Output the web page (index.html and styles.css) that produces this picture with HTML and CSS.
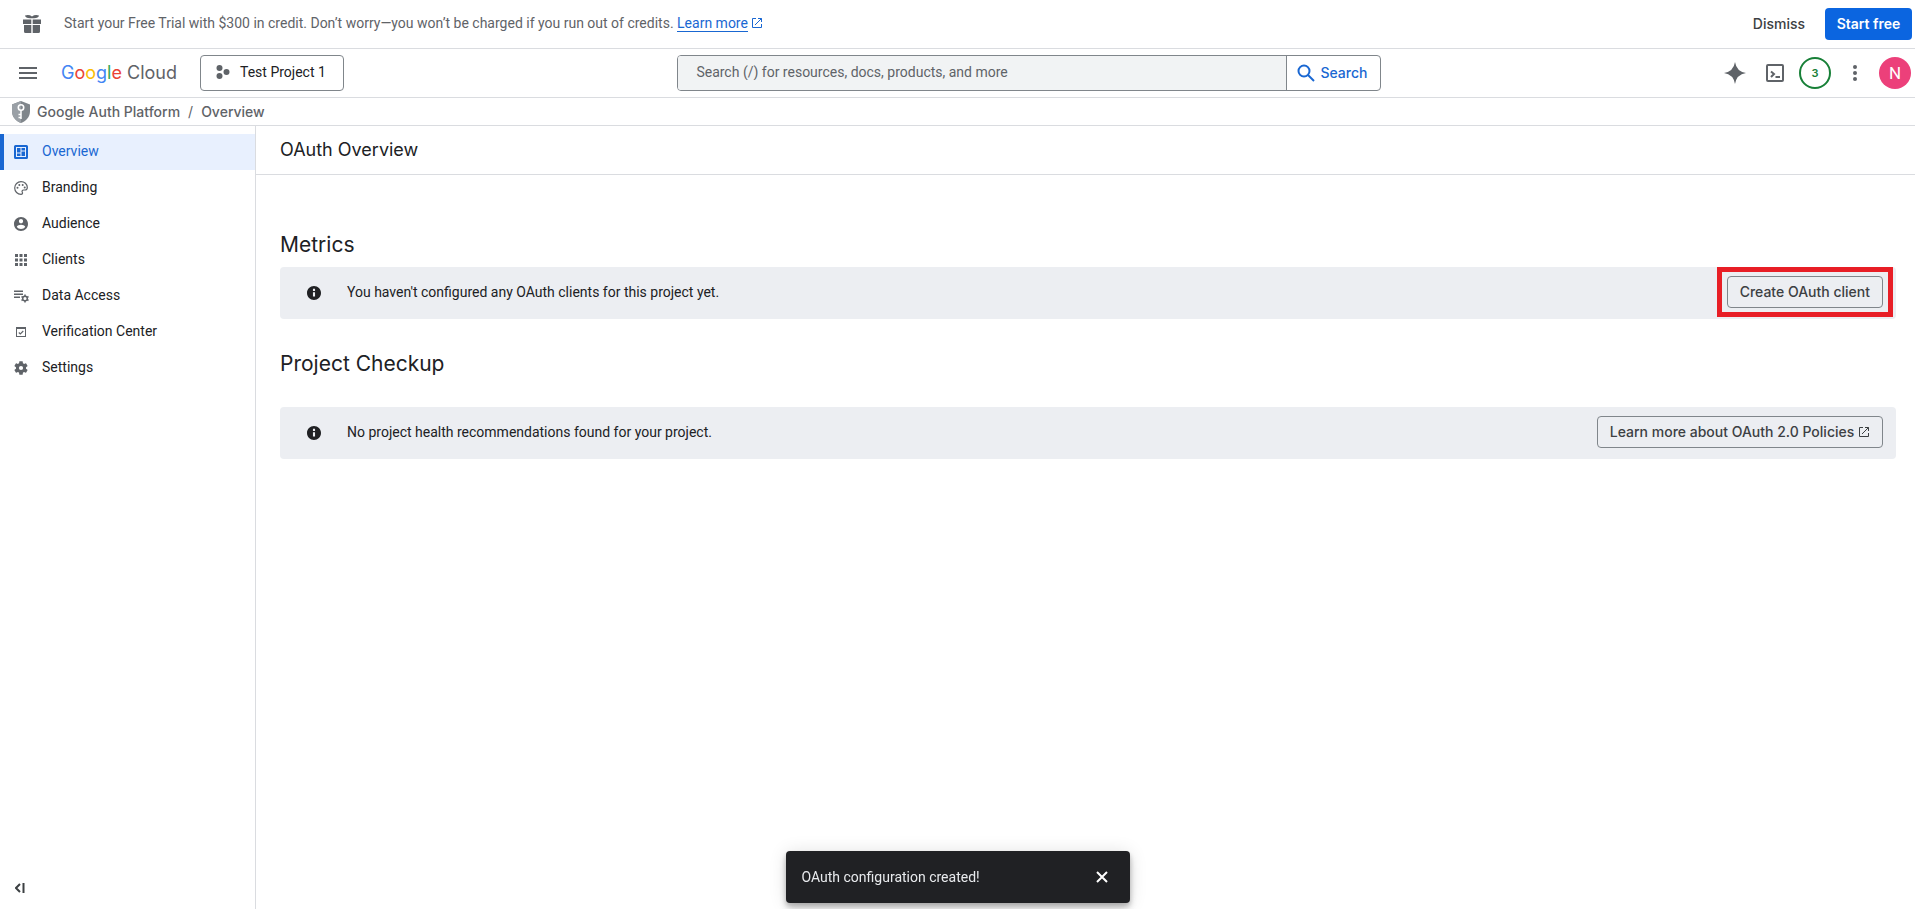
FILE: index.html
```html
<!DOCTYPE html>
<html lang="en">
<head>
    <meta charset="UTF-8">
    <meta name="viewport" content="width=device-width, initial-scale=1.0">
    <title>OAuth Overview – Google Auth Platform</title>
    <link rel="stylesheet" href="styles.css">
</head>
<body>
    <div class="promo">
        <svg class="promo-icon" viewBox="0 0 18 18" aria-hidden="true">
            <path d="M0 4.500h8.300V9H0zM9.700 4.500H18V9H9.700zM1 10h7.300v8H2.500A1.500 1.500 0 0 1 1 16.500zM9.700 10H17v6.500a1.500 1.500 0 0 1-1.500 1.500H9.700zM2 .5Q6-.8 9 1.500Q12-.8 16 .5Q15.500 3.200 11 3.200H7Q2.500 3.200 2 .5z"/>
        </svg>
        <p class="promo-text">Start your Free Trial with $300 in credit. Don’t worry—you won’t be charged if you run out of credits. <a href="#">Learn more</a>
            <svg class="external" viewBox="0 0 12 12" aria-hidden="true"><path d="M5 1.500H1.500v9h9V7M7 1.500h3.500V5M10.500 1.500L4 8"/></svg>
        </p>
        <button class="text-button" type="button">Dismiss</button>
        <button class="primary-button" type="button">Start free</button>
    </div>

    <header class="topbar">
        <div class="topbar-left">
            <button class="menu-button" type="button" aria-label="Main menu">
                <svg viewBox="0 0 18 12" width="18" height="12"><path d="M0 0h18v2H0zM0 5h18v2H0zM0 10h18v2H0z"/></svg>
            </button>
            <a class="logo" href="#"><span class="blue">G</span><span class="red">o</span><span class="yellow">o</span><span class="blue">g</span><span class="green">l</span><span class="red">e</span> Cloud</a>
            <button class="project-button" type="button">
                <svg viewBox="0 0 14 14" width="14" height="14"><circle cx="3.500" cy="3" r="3"/><circle cx="3.500" cy="11" r="3"/><circle cx="10.500" cy="7" r="3"/></svg>
                Test Project 1
            </button>
        </div>
        <form class="search" role="search">
            <input type="search" aria-label="Search" placeholder="Search (/) for resources, docs, products, and more">
            <button type="button">
                <svg viewBox="0 0 18 18" width="18" height="18"><circle cx="7" cy="7" r="5.500"/><path d="M11 11l6 6"/></svg>
                Search
            </button>
        </form>
        <div class="topbar-right">
            <button type="button" aria-label="Gemini">
                <svg viewBox="0 0 22 22" width="22" height="22"><path d="M11 0Q12.500 9.500 22 11Q12.500 12.500 11 22Q9.500 12.500 0 11Q9.500 9.500 11 0z"/></svg>
            </button>
            <button type="button" aria-label="Cloud Shell">
                <svg class="line-icon" viewBox="0 0 18 18" width="18" height="18"><rect x="1" y="1" width="16" height="16" rx="1"/><path d="M5 7.500l3 2.500-3 3M9.500 13H14"/></svg>
            </button>
            <button type="button" aria-label="Notifications"><span class="count">3</span></button>
            <button type="button" aria-label="More options">
                <svg viewBox="0 0 4 16" width="4" height="16"><circle cx="2" cy="2" r="2"/><circle cx="2" cy="8" r="2"/><circle cx="2" cy="14" r="2"/></svg>
            </button>
            <button type="button" aria-label="Account"><span class="avatar">N</span></button>
        </div>
    </header>

    <nav class="breadcrumb" aria-label="Breadcrumb">
        <svg viewBox="0 0 18 22" width="18" height="22" aria-hidden="true">
            <path fill="#80868b" d="M9 0l9 3.500V10c0 6-4 10-9 12C4 20 0 16 0 10V3.500z"/>
            <path fill="#9aa0a6" d="M9 0L0 3.500V10c0 6 4 10 9 12z"/>
            <path fill="none" stroke="#fff" stroke-width="1.500" d="M9 9v9M9 13.500H6.500M9 16.500H6.500"/>
            <circle cx="9" cy="6.500" r="2.700" fill="none" stroke="#fff" stroke-width="1.600"/>
        </svg>
        <a href="#">Google Auth Platform</a>
        <span class="slash">/</span>
        <span>Overview</span>
    </nav>

    <div class="layout">
        <aside class="sidebar">
            <nav>
                <a class="nav-item active" href="#">
                    <svg viewBox="0 0 14 14"><path fill-rule="evenodd" d="M1.500 0h11A1.500 1.500 0 0 1 14 1.500v11a1.500 1.500 0 0 1-1.500 1.500h-11A1.500 1.500 0 0 1 0 12.500v-11A1.500 1.500 0 0 1 1.500 0zM2 2v10h10V2zM3 3h3.500v4.500H3zM7.500 3H11v2.500H7.500zM7.500 6.500H11V11H7.500zM3 8.500h3.500V11H3z"/></svg>
                    Overview
                </a>
                <a class="nav-item" href="#">
                    <svg viewBox="0 0 14 14"><path fill="none" stroke="#5f6368" stroke-width="1.200" d="M7 .7a6.300 6.300 0 0 0 0 12.600c1.400 0 1.900-1 1.300-2-.7-1.200 0-2.300 1.200-2.300H11c1.500 0 2.300-1 2.300-2.500C13.300 3 10.400.7 7 .7z"/><circle cx="3.500" cy="6.800" r="1"/><circle cx="5.300" cy="3.900" r="1"/><circle cx="8.700" cy="3.900" r="1"/><circle cx="10.700" cy="6.500" r="1"/></svg>
                    Branding
                </a>
                <a class="nav-item" href="#">
                    <svg viewBox="2 2 20 20"><path d="M12 2C6.480 2 2 6.480 2 12s4.480 10 10 10 10-4.480 10-10S17.520 2 12 2zm0 3c1.660 0 3 1.340 3 3s-1.340 3-3 3-3-1.340-3-3 1.340-3 3-3zm0 14.200c-2.500 0-4.710-1.280-6-3.220.03-1.990 4-3.080 6-3.080 1.990 0 5.970 1.090 6 3.080-1.290 1.940-3.500 3.220-6 3.220z"/></svg>
                    Audience
                </a>
                <a class="nav-item" href="#">
                    <svg viewBox="0 0 14 14"><path d="M1 1h3v3H1zM5.500 1h3v3h-3zM10 1h3v3h-3zM1 5.500h3v3H1zM5.500 5.500h3v3h-3zM10 5.500h3v3h-3zM1 10h3v3H1zM5.500 10h3v3h-3zM10 10h3v3h-3z"/></svg>
                    Clients
                </a>
                <a class="nav-item" href="#">
                    <svg viewBox="0 0 14 14"><path d="M0 1.500h9V3H0zM0 4.500h9V6H0zM0 7.500h6V9H0z"/><circle cx="11" cy="9.500" r="2.300" fill="none" stroke="#5f6368" stroke-width="1.500"/><path fill="none" stroke="#5f6368" stroke-width="1.500" d="M11 5.500V7M11 12v1.500M7.500 7.500l1.300.8M13.200 10.700l1.300.8M7.500 11.500l1.300-.8M13.200 8.300l1.300-.8"/></svg>
                    Data Access
                </a>
                <a class="nav-item" href="#">
                    <svg viewBox="0 0 14 14"><path fill-rule="evenodd" d="M2 2h10v10H2zM3 4v7h8V4z"/><path fill="none" stroke="#5f6368" stroke-width="1.100" d="M4.800 7.500l1.500 1.500 3-3"/></svg>
                    Verification Center
                </a>
                <a class="nav-item" href="#">
                    <svg viewBox="2 2 20 20"><path d="M19.140 12.940c.04-.3.060-.61.060-.94 0-.32-.02-.64-.07-.94l2.030-1.580c.18-.14.230-.41.120-.61l-1.920-3.320c-.12-.22-.37-.29-.59-.22l-2.390.96c-.5-.38-1.030-.7-1.620-.94l-.36-2.540c-.04-.24-.24-.41-.48-.41h-3.840c-.24 0-.43.170-.47.410l-.36 2.540c-.59.240-1.130.570-1.620.940l-2.390-.96c-.22-.08-.47 0-.59.220L2.740 8.870c-.12.210-.08.470.120.610l2.030 1.580c-.05.3-.09.630-.09.940s.02.640.070.940l-2.030 1.580c-.18.140-.23.410-.12.610l1.920 3.320c.12.220.37.290.59.220l2.390-.96c.5.380 1.030.7 1.620.940l.36 2.540c.05.240.24.410.48.410h3.840c.24 0 .44-.17.470-.41l.36-2.540c.59-.24 1.130-.56 1.620-.94l2.390.96c.22.080.47 0 .59-.22l1.920-3.320c.12-.22.070-.47-.12-.61l-2.010-1.580zM12 15a3 3 0 1 1 0-6 3 3 0 0 1 0 6z"/></svg>
                    Settings
                </a>
            </nav>
            <button class="collapse" type="button" aria-label="Collapse navigation">
                <svg viewBox="0 0 10 10" width="10" height="10"><path d="M5 1L1 5l4 4M8.500 0v10"/></svg>
            </button>
        </aside>

        <main>
            <h1>OAuth Overview</h1>
            <section class="content">
                <h2>Metrics</h2>
                <div class="notice">
                    <svg class="info" viewBox="2 2 20 20" aria-hidden="true"><path d="M12 2C6.480 2 2 6.480 2 12s4.480 10 10 10 10-4.480 10-10S17.520 2 12 2zm1.500 15h-3v-6h3v6zm0-8h-3V6h3v3z"/></svg>
                    <p>You haven't configured any OAuth clients for this project yet.</p>
                    <button class="outline-button highlight" type="button">Create OAuth client</button>
                </div>
                <h2 class="checkup">Project Checkup</h2>
                <div class="notice">
                    <svg class="info" viewBox="2 2 20 20" aria-hidden="true"><path d="M12 2C6.480 2 2 6.480 2 12s4.480 10 10 10 10-4.480 10-10S17.520 2 12 2zm1.500 15h-3v-6h3v6zm0-8h-3V6h3v3z"/></svg>
                    <p>No project health recommendations found for your project.</p>
                    <a class="outline-button" href="#">Learn more about OAuth 2.0 Policies
                        <svg class="external" viewBox="0 0 12 12" aria-hidden="true"><path d="M5 1.500H1.500v9h9V7M7 1.500h3.500V5M10.500 1.500L4 8"/></svg>
                    </a>
                </div>
            </section>
        </main>
    </div>

    <div class="toast" role="status">
        <span>OAuth configuration created!</span>
        <button type="button" aria-label="Close">
            <svg viewBox="0 0 12 12" width="12" height="12"><path d="M1 1l10 10M11 1L1 11"/></svg>
        </button>
    </div>
</body>
</html>
```
FILE: styles.css
```css
:root {
    --text: #202124;
    --grey: #5f6368;
    --line: #dadce0;
    --blue: #1967d2;
    --display: Inter, "Open Sans", sans-serif;
}
* { box-sizing: border-box; }
body {
    margin: 0;
    min-height: 100vh;
    display: flex;
    flex-direction: column;
    font-family: Roboto, sans-serif;
    font-size: 14px;
    line-height: 20px;
    color: var(--text);
    background: #fff;
}
button {
    font: inherit;
    color: inherit;
    background: none;
    border: 0;
    padding: 0;
    cursor: pointer;
}
a { color: inherit; text-decoration: none; }
p { margin: 0; }
svg { flex: none; fill: var(--grey); }

/* Free trial bar */
.promo {
    display: flex;
    align-items: center;
    height: 49px;
    padding: 0 3px 0 23px;
    border-bottom: 1px solid var(--line);
}
.promo-icon { width: 18px; height: 18px; margin-right: 23px; }
.promo-text { flex: 1; padding-bottom: 2px; color: var(--grey); }
.promo-text a {
    color: var(--blue);
    border-bottom: 1px solid var(--blue);
}
.external {
    width: 12px;
    height: 12px;
    fill: none;
    stroke: currentColor;
    vertical-align: -1px;
}
.promo-text .external { color: var(--blue); }
.text-button, .primary-button {
    height: 32px;
    border-radius: 4px;
    font-family: var(--display);
    font-weight: 500;
}
.text-button { color: #3c4043; padding: 0 20px; }
.primary-button {
    width: 87px;
    color: #fff;
    background: #0b65e0;
    font-weight: 600;
}

/* Header */
.topbar {
    display: flex;
    align-items: center;
    justify-content: space-between;
    height: 49px;
    border-bottom: 1px solid var(--line);
}
.topbar-left { display: flex; align-items: center; }
.menu-button { display: flex; padding: 8px; margin-left: 11px; }
.logo {
    width: 155px;
    padding-left: 16px;
    font-family: var(--display);
    font-size: 18px;
    color: var(--grey);
    white-space: nowrap;
}
.logo .blue { color: #4285f4; }
.logo .red { color: #ea4335; }
.logo .yellow { color: #fbbc04; }
.logo .green { color: #34a853; }
.project-button {
    display: flex;
    align-items: center;
    gap: 10px;
    height: 36px;
    padding: 0 17px 2px 15px;
    border: 1px solid #80868b;
    border-radius: 4px;
}
.search {
    display: flex;
    flex: 0 1 704px;
    height: 36px;
    border: 1px solid #80868b;
    border-radius: 4px;
    overflow: hidden;
}
.search input {
    flex: 1;
    min-width: 0;
    border: 0;
    padding: 0 18px 2px;
    font: inherit;
    background: #f1f3f4;
}
.search input::placeholder { color: var(--grey); opacity: 1; }
.search button {
    display: flex;
    align-items: center;
    gap: 5px;
    width: 94px;
    padding-left: 10px;
    border-left: 1px solid #80868b;
    font-family: var(--display);
    font-weight: 500;
    color: var(--blue);
}
.search svg { fill: none; stroke: var(--blue); stroke-width: 2; }
.topbar-right { display: flex; }
.topbar-right button {
    display: flex;
    align-items: center;
    justify-content: center;
    width: 40px;
    height: 40px;
}
.line-icon { fill: none; stroke: var(--grey); stroke-width: 2; }
.count, .avatar {
    width: 32px;
    height: 32px;
    line-height: 32px;
    border-radius: 50%;
    text-align: center;
}
.count {
    line-height: 28px;
    border: 2px solid #188038;
    color: #188038;
    font-family: var(--display);
    font-size: 11px;
    font-weight: 600;
}
.avatar { background: #ec407a; color: #fff; font-size: 17px; }

/* Breadcrumb */
.breadcrumb {
    display: flex;
    align-items: center;
    height: 28px;
    padding-left: 12px;
    border-bottom: 1px solid var(--line);
    font-family: var(--display);
    font-weight: 500;
    color: var(--grey);
}
.breadcrumb svg { margin-right: 7px; }
.slash { margin: 0 8px; font-weight: 400; }

/* Page body */
.layout { display: flex; flex: 1; }
.sidebar {
    display: flex;
    flex-direction: column;
    justify-content: space-between;
    width: 256px;
    padding-top: 8px;
    border-right: 1px solid var(--line);
}
.nav-item {
    display: flex;
    align-items: center;
    height: 36px;
    padding: 0 0 2px 10px;
    border-left: 4px solid transparent;
}
.nav-item svg {
    width: 14px;
    height: 14px;
    margin: 2px 14px 0 0;
    overflow: visible;
}
.nav-item.active {
    color: var(--blue);
    background: #e8f0fe;
    border-color: var(--blue);
}
.nav-item.active svg { fill: var(--blue); }
.collapse {
    align-self: flex-start;
    display: flex;
    padding: 16px 15px;
}
.collapse svg { fill: none; stroke: #3c4043; stroke-width: 2; }
main { flex: 1; min-width: 0; }
h1, h2 { margin: 0; font-family: var(--display); font-weight: 400; }
h1 {
    height: 49px;
    padding-left: 24px;
    line-height: 48px;
    font-size: 18px;
    border-bottom: 1px solid var(--line);
}
.content { padding: 54px 19px 0 24px; }
h2 { font-size: 21px; line-height: 32px; padding-bottom: 6px; }
.checkup { padding: 29px 0 27px; }
.notice {
    display: flex;
    align-items: center;
    height: 52px;
    padding: 0 13px 2px 27px;
    border-radius: 4px;
    background: #eceef2;
}
.info { width: 14px; height: 14px; margin-top: 2px; fill: var(--text); }
.notice p { flex: 1; margin-left: 26px; }
.outline-button {
    position: relative;
    height: 32px;
    padding: 0 12px;
    border: 1px solid #80868b;
    border-radius: 4px;
    font-family: var(--display);
    font-weight: 500;
    line-height: 30px;
    color: #3c4043;
}
/* red frame drawn around the call to action */
.highlight::after {
    content: "";
    position: absolute;
    inset: -10px -11px;
    border: 5px solid #e81e26;
}

/* Snackbar */
.toast {
    position: fixed;
    bottom: 6px;
    left: 50%;
    transform: translateX(-50%);
    display: flex;
    align-items: center;
    justify-content: space-between;
    width: 344px;
    height: 52px;
    padding: 0 14px 0 16px;
    border-radius: 4px;
    color: #e8eaed;
    background: #202124;
    box-shadow: 0 3px 5px rgba(0, 0, 0, .2), 0 6px 10px rgba(0, 0, 0, .14), 0 1px 18px rgba(0, 0, 0, .12);
}
.toast button { display: flex; padding: 8px; }
.toast svg { fill: none; stroke: #fff; stroke-width: 2; }
```
